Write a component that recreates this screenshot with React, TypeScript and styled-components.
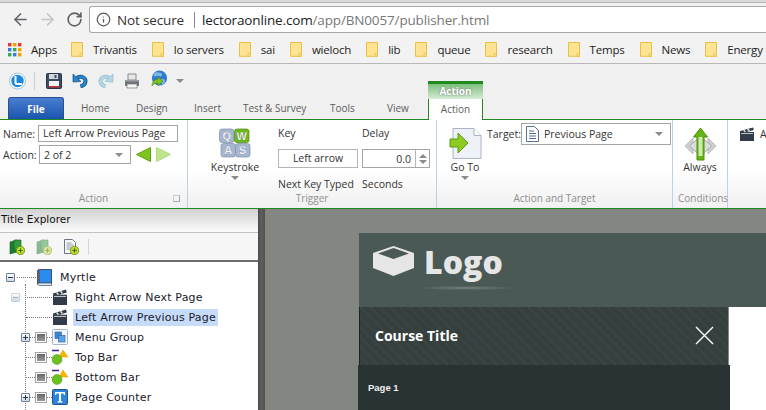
import React from 'react';
import styled, { createGlobalStyle } from 'styled-components';
import { ArrowLeft, ArrowRight, RotateCw, Info } from 'lucide-react';

const Global = createGlobalStyle`
  html, body { margin: 0; padding: 0; }
  body { width: 766px; height: 410px; overflow: hidden; background: #fff; }
  * { box-sizing: border-box; }
`;

const Page = styled('div')`
  width: 766px;
  height: 410px;
  display: flex;
  flex-direction: column;
  overflow: hidden;
  font-family: "Open Sans", "Liberation Sans", sans-serif;
`;

const TabStrip = styled('div')`
  height: 3px;
  background: #dadada;
  border-bottom: 1px solid #b4b4b4;
`;

const AddressBar = styled('div')`
  height: 33px;
  background: #f2f2f2;
  display: flex;
  align-items: center;
  padding: 0 0 0 7px;
  color: #5a5a5a;
`;

const NavButton = styled('div')<{ $off?: boolean }>`
  width: 27px;
  display: flex;
  justify-content: center;
  color: ${({ $off }) => ($off ? '#c4c4c4' : '#5f6368')};
`;

const UrlBox = styled('div')`
  flex: 1;
  height: 27px;
  margin-left: 1px;
  background: #fff;
  border: 1px solid #a9a9a9;
  border-right: 0;
  border-radius: 3px 0 0 3px;
  display: flex;
  align-items: center;
  padding-left: 6px;
  font-size: 13.5px;
  letter-spacing: -0.15px;
  white-space: nowrap;
`;

const NotSecure = styled('span')`
  margin-left: 6px;
  color: #333;
`;

const UrlDivider = styled('span')`
  width: 1px;
  height: 16px;
  background: #888;
  margin: 0 7px 0 10px;
`;

const Domain = styled('span')`
  color: #222;
`;

const UrlPath = styled('span')`
  color: #777;
`;

const Bookmarks = styled('div')`
  height: 28px;
  background: #f2f2f2;
  border-bottom: 1px solid #b8b8b8;
  display: flex;
  align-items: center;
  padding-left: 8px;
  white-space: nowrap;
  overflow: hidden;
  font-size: 11.5px;
  letter-spacing: -0.2px;
  color: #222;
`;

const AppsItem = styled('span')`
  display: flex;
  align-items: center;
  gap: 9px;
  margin-right: 14px;
`;

const Bookmark = styled('span')`
  display: flex;
  align-items: center;
  flex: none;
  gap: 10px;
  margin-right: 15px;
`;

const AppBar = styled('div')`
  height: 56px;
  background: #f0f0f0;
  display: flex;
  flex-direction: column;
  position: relative;
  border-bottom: 1px solid #1f8a1f;
`;

const QuickTools = styled('div')`
  height: 33px;
  display: flex;
  align-items: center;
  padding-left: 9px;
`;

const ToolSep = styled('span')`
  width: 1px;
  height: 18px;
  background: #cfcfcf;
  margin: 0 11px 0 8px;
`;

const ToolIcon = styled('span')<{ $gap?: number; $up?: number }>`
  display: flex;
  margin-right: ${({ $gap }) => $gap ?? 10}px;
  margin-bottom: ${({ $up }) => $up ?? 0}px;
`;

const Mirror = styled('span')`
  display: flex;
  transform: scaleX(-1);
`;

const Caret = styled('span')`
  display: block;
  width: 0;
  height: 0;
  border-left: 4px solid transparent;
  border-right: 4px solid transparent;
  border-top: 4px solid #8a8a8a;
`;

const Tabs = styled('div')`
  flex: 1;
  display: flex;
  align-items: flex-end;
  padding-left: 8px;
  font-size: 10px;
  color: #5c5c5c;
`;

const FileTab = styled('div')`
  width: 56px;
  height: 22px;
  margin-right: 17px;
  background: linear-gradient(#4a7ed0, #1a55ad);
  border: 1px solid #2a4f8f;
  border-bottom: 0;
  border-radius: 3px 3px 0 0;
  color: #fff;
  font-weight: 700;
  display: flex;
  align-items: center;
  justify-content: center;
`;

const Tab = styled('div')<{ $w: number }>`
  width: ${({ $w }) => $w}px;
  height: 22px;
  display: flex;
  align-items: center;
`;

const ContextTab = styled('div')`
  position: relative;
  width: 55px;
  height: 23px;
  margin-bottom: -1px;
  background: #fff;
  border: 1px solid #1f8a1f;
  border-bottom: 0;
  border-radius: 2px 2px 0 0;
  display: flex;
  align-items: center;
  justify-content: center;
`;

const ContextHeader = styled('div')`
  position: absolute;
  left: -1px;
  right: -1px;
  bottom: 21px;
  height: 18px;
  border-top: 3px solid #1f8a1f;
  background: linear-gradient(#7cc07c, #d5ebd5);
  color: #fff;
  font-weight: 700;
  text-align: center;
  line-height: 15px;
  text-shadow: 0 0 2px #666;
`;

const Ribbon = styled('div')`
  height: 89px;
  display: flex;
  border-bottom: 1px solid #1f8a1f;
  background: linear-gradient(#fff 55%, #f0f0f0);
  font-size: 10.5px;
  color: #333;
`;

const Group = styled('div')<{ $w: number }>`
  width: ${({ $w }) => $w}px;
  flex: none;
  display: flex;
  flex-direction: column;
  border-right: 1px solid #bcd0e6;
  position: relative;
`;

const GroupBody = styled('div')`
  flex: 1;
  display: flex;
  min-height: 0;
`;

const GroupLabel = styled('div')<{ $shift?: number }>`
  height: 22px;
  padding-left: ${({ $shift }) => $shift ?? 0}px;
  text-align: center;
  white-space: nowrap;
  font-size: 10px;
  line-height: 25px;
  color: #8f8f8f;
`;

const Launcher = styled('span')`
  position: absolute;
  right: 7px;
  bottom: 6px;
  width: 7px;
  height: 7px;
  border: 1px solid #aaa;
  border-top-color: #ccc;
  border-left-color: #ccc;
`;

const ActionForm = styled('div')`
  padding: 5px 0 0 3px;
  display: grid;
  grid-template-columns: 35px auto;
  grid-auto-rows: min-content;
  row-gap: 3px;
  align-items: center;
`;

const FieldText = styled('span')`
  white-space: nowrap;
`;

const NameInput = styled('div')`
  width: 140px;
  height: 17px;
  border: 1px solid #a5a5a5;
  background: #fff;
  padding-left: 4px;
  line-height: 15px;
  white-space: nowrap;
`;

const ActionRow = styled('div')`
  display: flex;
  align-items: center;
  gap: 5px;
  margin-left: 1px;
`;

const Dropdown = styled('div')<{ $w: number; $h: number }>`
  width: ${({ $w }) => $w}px;
  height: ${({ $h }) => $h}px;
  background: #fff;
  border: 1px solid #a5a5a5;
  display: flex;
  align-items: center;
  justify-content: space-between;
  padding: 0 7px 0 4px;
`;

const BigAction = styled('div')<{ $w: number; $ml: number }>`
  width: ${({ $w }) => $w}px;
  margin-left: ${({ $ml }) => $ml}px;
  padding-top: 8px;
  display: flex;
  flex-direction: column;
  align-items: center;
  flex: none;
`;

const BigIcon = styled('div')`
  height: 31px;
  display: flex;
  justify-content: center;
`;

const BigText = styled('div')`
  margin-top: 1px;
  line-height: 15px;
  white-space: nowrap;
`;

const BigCaret = styled(Caret)`
  margin-top: 1px;
`;

const TriggerGrid = styled('div')`
  margin-left: 18px;
  padding-top: 5px;
  display: grid;
  grid-template-columns: 80px 68px;
  column-gap: 4px;
  grid-template-rows: 16px 19px 16px;
  row-gap: 8px;
  align-items: center;
`;

const KeyBox = styled('div')`
  height: 19px;
  border: 1px solid #b5b5b5;
  background: #fff;
  text-align: center;
  line-height: 17px;
`;

const Spinner = styled('div')`
  height: 19px;
  border: 1px solid #a5a5a5;
  background: #fff;
  display: flex;
  align-items: center;
  justify-content: flex-end;
`;

const SpinValue = styled('span')`
  padding-right: 4px;
`;

const SpinArrows = styled('span')`
  width: 14px;
  height: 100%;
  border-left: 1px solid #b5b5b5;
  display: flex;
  flex-direction: column;
  align-items: center;
  justify-content: center;
  gap: 2px;
`;

const SpinUp = styled('span')`
  border-left: 4px solid transparent;
  border-right: 4px solid transparent;
  border-bottom: 4px solid #8a8a8a;
`;

const SpinDown = styled('span')`
  border-left: 4px solid transparent;
  border-right: 4px solid transparent;
  border-top: 4px solid #8a8a8a;
`;

const TargetRow = styled('div')`
  margin-left: 2px;
  padding-top: 3px;
  display: flex;
  align-items: flex-start;
`;

const TargetLabel = styled('span')`
  line-height: 22px;
`;

const TargetValue = styled('span')`
  display: flex;
  align-items: center;
  gap: 5px;
`;

const LastGroup = styled('div')`
  flex: 1;
  display: flex;
  align-items: flex-start;
  gap: 6px;
  padding: 7px 0 0 12px;
`;

const Workspace = styled('div')`
  flex: 1;
  display: flex;
  min-height: 0;
`;

const Explorer = styled('div')`
  width: 258px;
  display: flex;
  flex-direction: column;
  background: #fff;
`;

const ExplorerTitle = styled('div')`
  height: 24px;
  padding: 0 0 0 1px;
  background: linear-gradient(#d2d2d2, #fbfbfb);
  border-bottom: 1px solid #c4c4c4;
  font-family: "DejaVu Sans", sans-serif;
  font-size: 10.5px;
  line-height: 21px;
  color: #111;
`;

const ExplorerTools = styled('div')`
  height: 29px;
  display: flex;
  align-items: center;
  padding-left: 9px;
  gap: 11px;
  background: #f6f6f6;
  border-bottom: 2px solid #6e6e6e;
`;

const ExplorerSep = styled('span')`
  width: 1px;
  height: 16px;
  margin-left: -2px;
  background: #d5d5d5;
`;

const Tree = styled('div')`
  flex: 1;
  position: relative;
  padding-top: 5px;
  font-family: "DejaVu Sans", sans-serif;
  font-size: 11px;
  letter-spacing: 0.2px;
  color: #1a1a2e;
  overflow: hidden;

  &::before {
    content: '';
    position: absolute;
    left: 25px;
    top: 22px;
    bottom: 0;
    border-left: 1px dotted #777;
  }
`;

const TreeRow = styled('div')<{ $pad: number }>`
  position: relative;
  height: 20px;
  display: flex;
  align-items: center;
  padding-left: ${({ $pad }) => $pad}px;
`;

const Expander = styled('span')<{ $pale?: boolean }>`
  position: relative;
  z-index: 1;
  width: 9px;
  height: 9px;
  flex: none;
  border: 1px solid ${({ $pale }) => ($pale ? '#c8d2de' : '#6d7f96')};
  border-radius: 1px;
  background: linear-gradient(#fff, #ccd8e8);
  display: flex;
  align-items: center;
  justify-content: center;
`;

const ExpanderMark = styled('span')<{ $plus?: boolean; $pale?: boolean }>`
  position: relative;
  width: 5px;
  height: 1px;
  background: ${({ $pale }) => ($pale ? '#a0a8b4' : '#22344e')};

  &::after {
    content: '';
    display: ${({ $plus }) => ($plus ? 'block' : 'none')};
    position: absolute;
    left: 2px;
    top: -2px;
    width: 1px;
    height: 5px;
    background: #22344e;
  }
`;

const Dots = styled('span')<{ $w: number; $ml?: number }>`
  width: ${({ $w }) => $w}px;
  margin-left: ${({ $ml }) => $ml ?? 0}px;
  flex: none;
  border-top: 1px dotted #777;
`;

const VisBox = styled('span')`
  width: 12px;
  height: 11px;
  flex: none;
  border: 1px solid #a4a4a4;
  background: #fff;
  padding: 1px;

  &::after {
    content: '';
    display: block;
    width: 100%;
    height: 100%;
    background: linear-gradient(#666, #999);
  }
`;

const TreeIcon = styled('span')`
  width: 16px;
  height: 16px;
  flex: none;
  display: flex;
  align-items: center;
  justify-content: center;
`;

const TreeLabel = styled('span')<{ $selected?: boolean }>`
  margin-left: 5px;
  padding: 0 2px;
  line-height: 17px;
  white-space: nowrap;
  background: ${({ $selected }) => ($selected ? '#c5dbf7' : 'transparent')};
`;

const RootLabel = styled(TreeLabel)`
  margin-left: 6px;
`;

const Splitter = styled('div')`
  width: 7px;
  background: linear-gradient(90deg, #4c4c4c, #5e5e5e 50%, #505050);
`;

const Canvas = styled('div')`
  flex: 1;
  min-width: 0;
  background: #848682;
  padding: 24px 0 0 94px;
  overflow: hidden;
`;

const Course = styled('div')`
  width: 420px;
  height: 200px;
  background: #fff;
`;

const CourseHeader = styled('div')`
  height: 74px;
  background: #4a5955;
  display: flex;
  align-items: flex-start;
  padding: 13px 0 0 14px;
  gap: 10px;
`;

const LogoBlock = styled('div')`
  display: flex;
  flex-direction: column;
`;

const LogoText = styled('div')`
  margin-top: -1px;
  font-family: "Open Sans", sans-serif;
  font-weight: 800;
  font-size: 32px;
  line-height: 34px;
  color: #e6e6e6;
`;

const LogoShine = styled('div')`
  width: 94px;
  height: 4px;
  margin: 7px 0 0 -5px;
  background: radial-gradient(ellipse at center, #75827e, #4a5955 75%);
`;

const CourseMenu = styled('div')`
  width: 372px;
  margin-left: -1px;
`;

const CourseBar = styled('div')`
  height: 58px;
  margin: 0 1px;
  background: repeating-linear-gradient(45deg, #353f3e 0, #353f3e 5px, #3a4443 5px, #3a4443 7px);
  border-left: 1px solid #222;
  border-right: 1px solid #888;
  display: flex;
  align-items: center;
  justify-content: space-between;
  padding: 0 14px 2px 15px;
  color: #fff;
  font-family: "Open Sans", sans-serif;
  font-weight: 700;
  font-size: 14px;
`;

const PageItem = styled('div')`
  height: 50px;
  background: #293333;
  color: #f0f0f0;
  padding: 17px 0 0 10px;
  font-family: "Liberation Sans", sans-serif;
  font-weight: 700;
  font-size: 9.5px;
`;

const folderNames = ['Trivantis', 'lo servers', 'sai', 'wieloch', 'lib', 'queue', 'research', 'Temps', 'News', 'Energy'];

const AppsGrid = () => (
  <svg width="14" height="14" viewBox="0 0 14 14">
    {['#e53935', '#f4a000', '#e53935', '#3b78e7', '#34a853', '#f4a000', '#34a853', '#3b78e7', '#f4a000'].map((c, i) => (
      <rect key={i} x={(i % 3) * 5} y={Math.floor(i / 3) * 5} width="3.4" height="3.4" fill={c} />
    ))}
  </svg>
);

const Folder = () => (
  <svg width="12" height="15" viewBox="0 0 12 15">
    <path d="M.5.5h11v13.8H.5z" fill="#fde392" stroke="#e9bf45" />
    <rect x="9" y="11.5" width="2.5" height="2.5" fill="#fde392" stroke="#e9bf45" strokeWidth=".7" />
  </svg>
);

const LectoraLogo = () => (
  <svg width="17" height="18" viewBox="0 0 17 18">
    <circle cx="8.5" cy="9" r="8" fill="#fff" stroke="#9cc4e8" />
    <circle cx="8.5" cy="9" r="6.2" fill="#1b87d6" />
    <path d="M6.5 4v6.5c0 1 .5 1.5 1.5 1.5H13" fill="none" stroke="#fff" strokeWidth="2" />
  </svg>
);

const SaveIcon = () => (
  <svg width="16" height="16" viewBox="0 0 16 16">
    <rect x=".5" y=".5" width="15" height="15" rx="1" fill="#3f4d63" stroke="#2a3446" />
    <rect x="3" y="1" width="9" height="5" fill="#cfd6e0" />
    <rect x="8.5" y="2" width="2" height="3" fill="#3f4d63" />
    <rect x="3" y="8" width="10" height="5" fill="#f4f4f4" />
    <rect x="3" y="13" width="10" height="1.5" fill="#c8342c" />
  </svg>
);

const UndoIcon = ({ pale }: { pale?: boolean }) => (
  <svg width="16" height="15" viewBox="0 0 16 15">
    <path d="M8.5 13.5c3-1 5-3 5-5.5 0-3.5-4.5-5.5-8.5-3" fill="none" stroke={pale ? '#8fbdd0' : '#124c86'} strokeWidth="4" />
    <path d="M8.5 13.5c3-1 5-3 5-5.5 0-3.5-4.5-5.5-8.5-3" fill="none" stroke={pale ? '#b4d6e4' : '#2a86c8'} strokeWidth="2.6" />
    <path d="M1 1v8l8-.5z" fill={pale ? '#b4d6e4' : '#2a86c8'} stroke={pale ? '#8fbdd0' : '#124c86'} strokeWidth=".7" />
  </svg>
);

const RedoIcon = () => (
  <Mirror>
    <UndoIcon pale />
  </Mirror>
);

const PrintIcon = () => (
  <svg width="16" height="16" viewBox="0 0 16 16">
    <path d="M4 1h8v6H4z" fill="#e8e8e8" stroke="#8a8a8a" />
    <path d="M1 7h14v6H1z" fill="#6f7276" />
    <path d="M3 11h10v4H3z" fill="#f5f5f5" stroke="#777" strokeWidth=".7" />
    <path d="M1 7h14v1.5H1z" fill="#9a9da1" />
  </svg>
);

const GlobeIcon = () => (
  <svg width="17" height="17" viewBox="0 0 17 17">
    <circle cx="8.5" cy="8" r="7.6" fill="#2f7ccc" />
    <path d="M5 2c2 1 5 0 6 2s-2 3-3 2-4 1-5 0 0-3 2-4zM10 9c2 0 4 0 4 2s-2 4-3 3-2-4-1-5z" fill="#7fb7e8" />
    <path d="M1 16c0-4 2-6.5 6-6.5V7l5 4.300-5 4.300V13c-3 0-4.500 1-6 3z" fill="#7fc31c" stroke="#4d8a10" strokeWidth=".6" />
  </svg>
);

const TriLeft = ({ pale }: { pale?: boolean }) => (
  <svg width="15" height="15" viewBox="0 0 15 15">
    <path d="M14.5.5v14L.5 7.5z" fill={pale ? '#bfe58c' : '#7cc51f'} stroke={pale ? '#b0da7d' : '#5ea514'} />
  </svg>
);

const TriRight = () => (
  <Mirror>
    <TriLeft pale />
  </Mirror>
);

const KeyCap = ({ x, y, ch, on }: { x: number; y: number; ch: string; on?: boolean }) => (
  <g>
    <rect x={x} y={y} width="14.5" height="13.5" rx="2.5" fill={on ? '#6fb81b' : '#a6b6cf'} stroke={on ? '#4d8a10' : '#8091ab'} strokeWidth=".7" />
    <text x={x + 7.2} y={y + 10.5} textAnchor="middle" fontSize="11" fontWeight="700" fontFamily="Liberation Sans" fill="#fff" stroke="#5e6f8a" strokeWidth=".25">
      {ch}
    </text>
  </g>
);

const KeysIcon = () => (
  <svg width="32" height="31" viewBox="0 0 32 31">
    <KeyCap x={0.5} y={1} ch="Q" />
    <KeyCap x={15.5} y={1} ch="W" on />
    <KeyCap x={2} y={15.5} ch="A" />
    <KeyCap x={16.5} y={15.5} ch="S" />
  </svg>
);

const GoToIcon = () => (
  <svg width="33" height="31" viewBox="0 0 33 31">
    <path d="M4 .5h21l7 7v23H4z" fill="#eef2f8" stroke="#aab4c4" />
    <path d="M25 .5v7h7" fill="#fff" stroke="#aab4c4" />
    <path d="M1 11h8V5l10 10-10 10v-6H1z" fill="#8ccb1f" stroke="#5e9a10" />
  </svg>
);

const PageIcon = () => (
  <svg width="13" height="16" viewBox="0 0 13 16">
    <path d="M.5.5h8l4 4v11H.5z" fill="#fff" stroke="#5a6f96" />
    <path d="M3 5h5M3 7.5h7M3 10h7M3 12.5h7" stroke="#5a6f96" />
  </svg>
);

const AlwaysIcon = () => (
  <svg width="33" height="33" viewBox="0 0 33 33">
    <path d="M9 10L1 18l8 8zM24 10l8 8-8 8z" fill="#cfcfcf" stroke="#bcbcbc" />
    <path d="M16.5 8l11 10-11 10-11-10z" fill="#dcdcdc" stroke="#a8a8a8" />
    <path d="M16.5 0l7 9H20v23h-7V9H9.500z" fill="#62b512" stroke="#4b8f0c" />
    <rect x="14.5" y="9" width="4" height="19" fill="#cfe7b0" />
  </svg>
);

const ClapperIcon = ({ tall }: { tall?: boolean }) => (
  <svg width="14" height={tall ? 16 : 14} viewBox="0 0 14 14" preserveAspectRatio="none">
    <path d="M0 5h14v9H0z" fill="#323c48" />
    <path d="M0 4l13-3.500.8 2.500L.8 6.500z" fill="#323c48" />
    <path d="M3 3.300l1.500-.4 1.500 2-1.500.4zM7 2.200l1.500-.4 1.500 2-1.500.4z" fill="#e6e6e6" />
    <path d="M1 6.500h12" stroke="#e6e6e6" strokeWidth=".8" />
  </svg>
);

const BookIcon = () => (
  <svg width="15" height="17" viewBox="0 0 15 17">
    <path d="M2.5.5h12V14h-12c-1 0-1.500.5-2 1V2.500C.5 1 1 .5 2.500.5z" fill="#2a8cf0" stroke="#3a5168" />
    <path d="M.5 2.500C.5 1 1 .5 2.500.5H3V14h-.5c-1 0-1.500.5-2 1z" fill="#52677d" />
    <path d="M.8 15c.5-.7 1-1 2-1h11.700v2.500H2.500c-1 0-1.500-.5-1.700-1.500z" fill="#dfe8f2" stroke="#3a5168" strokeWidth=".7" />
  </svg>
);

const GroupIcon = () => (
  <svg width="16" height="16" viewBox="0 0 16 16">
    <rect x=".5" y=".5" width="15" height="15" rx="1" fill="#f3f6fb" stroke="#aab4c4" />
    <rect x="3" y="3" width="6.5" height="6.5" fill="#3d87d8" stroke="#2a5f9e" strokeWidth=".6" />
    <rect x="6.5" y="6.5" width="6.5" height="6.5" fill="#5aa0e8" stroke="#2a5f9e" strokeWidth=".6" />
  </svg>
);

const ShapesIcon = () => (
  <svg width="16" height="16" viewBox="0 0 16 16">
    <path d="M0 1.500h7" stroke="#3f1b8c" strokeWidth="1.5" />
    <path d="M11 1l5 7H7z" fill="#f7b500" stroke="#e29a00" strokeWidth=".5" />
    <circle cx="5" cy="10.5" r="5" fill="#6cbf20" stroke="#4f9a10" strokeWidth=".5" />
  </svg>
);

const TextIcon = () => (
  <svg width="16" height="16" viewBox="0 0 16 16">
    <rect x=".5" y=".5" width="15" height="15" rx="1" fill="#2c85dd" stroke="#24527f" />
    <path d="M3 3h10v3h-1l-.5-1.500H9V12l1.500.5v1h-5v-1L7 12V4.500H4.500L4 6H3z" fill="#fff" />
  </svg>
);

const AddBadge = () => (
  <g>
    <circle cx="11.5" cy="11.5" r="4.2" fill="#b7dc2a" stroke="#5b7f10" strokeWidth=".7" />
    <path d="M9.3 11.5h4.400M11.500 9.300v4.400" stroke="#33500a" strokeWidth=".8" />
  </g>
);

const AddChapter = ({ pale }: { pale?: boolean }) => (
  <svg width="16" height="16" viewBox="0 0 16 16" opacity={pale ? 0.5 : 1}>
    <path d="M1 3l7-2v12l-7 2z" fill="#1e7c2f" stroke="#145a20" strokeWidth=".6" />
    <path d="M5 1h7v10H5z" fill="#2f9a3f" stroke="#145a20" strokeWidth=".6" />
    <AddBadge />
  </svg>
);

const AddPage = () => (
  <svg width="16" height="16" viewBox="0 0 16 16">
    <path d="M1.5.5h8l3 3v11h-11z" fill="#f5f7fa" stroke="#6a7484" />
    <path d="M3.5 4h5M3.5 6h7M3.5 8h5M3.5 10h4" stroke="#7b8595" strokeWidth=".8" />
    <AddBadge />
  </svg>
);

const LogoBox = () => (
  <svg width="41" height="30" viewBox="0 0 41 30">
    <path d="M20.5 0L41 7v15l-20.500 8L0 22V7z" fill="#e6e6e6" />
    <path d="M20.5 2L36 7.500 20.500 13 5 7.500z" fill="#4a5955" />
  </svg>
);

const ExpandBox = ({ plus, pale }: { plus?: boolean; pale?: boolean }) => (
  <Expander $pale={pale}>
    <ExpanderMark $plus={plus} $pale={pale} />
  </Expander>
);

export default function App() {
  return (
    <Page>
      <Global />
      <TabStrip />
      <AddressBar>
        <NavButton><ArrowLeft size={19} strokeWidth={2} /></NavButton>
        <NavButton $off><ArrowRight size={19} strokeWidth={2} /></NavButton>
        <NavButton><RotateCw size={17} strokeWidth={2.4} /></NavButton>
        <UrlBox>
          <Info size={15} strokeWidth={2} />
          <NotSecure>Not secure</NotSecure>
          <UrlDivider />
          <Domain>lectoraonline.com</Domain>
          <UrlPath>/app/BN0057/publisher.html</UrlPath>
        </UrlBox>
      </AddressBar>
      <Bookmarks>
        <AppsItem><AppsGrid />Apps</AppsItem>
        {folderNames.map((name) => (
          <Bookmark key={name}><Folder />{name}</Bookmark>
        ))}
      </Bookmarks>
      <AppBar>
        <QuickTools>
          <LectoraLogo />
          <ToolSep />
          <ToolIcon><SaveIcon /></ToolIcon>
          <ToolIcon><UndoIcon /></ToolIcon>
          <ToolIcon><RedoIcon /></ToolIcon>
          <ToolIcon $gap={11}><PrintIcon /></ToolIcon>
          <ToolIcon $gap={8} $up={4}><GlobeIcon /></ToolIcon>
          <Caret />
        </QuickTools>
        <Tabs>
          <FileTab>File</FileTab>
          <Tab $w={55}>Home</Tab>
          <Tab $w={58}>Design</Tab>
          <Tab $w={49}>Insert</Tab>
          <Tab $w={87}>Test &amp; Survey</Tab>
          <Tab $w={57}>Tools</Tab>
          <Tab $w={41}>View</Tab>
          <ContextTab>
            <ContextHeader>Action</ContextHeader>
            Action
          </ContextTab>
        </Tabs>
      </AppBar>
      <Ribbon>
        <Group $w={188}>
          <GroupBody>
            <ActionForm>
              <FieldText>Name:</FieldText>
              <NameInput>Left Arrow Previous Page</NameInput>
              <FieldText>Action:</FieldText>
              <ActionRow>
                <Dropdown $w={92} $h={19}>2 of 2<Caret /></Dropdown>
                <TriLeft />
                <TriRight />
              </ActionRow>
            </ActionForm>
          </GroupBody>
          <GroupLabel>Action</GroupLabel>
          <Launcher />
        </Group>
        <Group $w={249}>
          <GroupBody>
            <BigAction $w={50} $ml={22}>
              <BigIcon><KeysIcon /></BigIcon>
              <BigText>Keystroke</BigText>
              <BigCaret />
            </BigAction>
            <TriggerGrid>
              <FieldText>Key</FieldText>
              <FieldText>Delay</FieldText>
              <KeyBox>Left arrow</KeyBox>
              <Spinner>
                <SpinValue>0.0</SpinValue>
                <SpinArrows><SpinUp /><SpinDown /></SpinArrows>
              </Spinner>
              <FieldText>Next Key Typed</FieldText>
              <FieldText>Seconds</FieldText>
            </TriggerGrid>
          </GroupBody>
          <GroupLabel>Trigger</GroupLabel>
        </Group>
        <Group $w={236}>
          <GroupBody>
            <BigAction $w={40} $ml={8}>
              <BigIcon><GoToIcon /></BigIcon>
              <BigText>Go To</BigText>
              <BigCaret />
            </BigAction>
            <TargetRow>
              <TargetLabel>Target:</TargetLabel>
              <Dropdown $w={150} $h={22}>
                <TargetValue><PageIcon />Previous Page</TargetValue>
                <Caret />
              </Dropdown>
            </TargetRow>
          </GroupBody>
          <GroupLabel>Action and Target</GroupLabel>
        </Group>
        <Group $w={55}>
          <GroupBody>
            <BigAction $w={54} $ml={0}>
              <BigIcon><AlwaysIcon /></BigIcon>
              <BigText>Always</BigText>
            </BigAction>
          </GroupBody>
          <GroupLabel $shift={5}>Conditions</GroupLabel>
        </Group>
        <LastGroup>
          <ClapperIcon />
          <FieldText>A</FieldText>
        </LastGroup>
      </Ribbon>
      <Workspace>
        <Explorer>
          <ExplorerTitle>Title Explorer</ExplorerTitle>
          <ExplorerTools>
            <AddChapter />
            <AddChapter pale />
            <AddPage />
            <ExplorerSep />
          </ExplorerTools>
          <Tree>
            <TreeRow $pad={6}>
              <ExpandBox />
              <Dots $w={19} $ml={2} />
              <TreeIcon><BookIcon /></TreeIcon>
              <RootLabel>Myrtle</RootLabel>
            </TreeRow>
            <TreeRow $pad={11}>
              <ExpandBox pale />
              <Dots $w={27} $ml={5} />
              <TreeIcon><ClapperIcon tall /></TreeIcon>
              <TreeLabel>Right Arrow Next Page</TreeLabel>
            </TreeRow>
            <TreeRow $pad={26}>
              <Dots $w={26} />
              <TreeIcon><ClapperIcon tall /></TreeIcon>
              <TreeLabel $selected>Left Arrow Previous Page</TreeLabel>
            </TreeRow>
            <TreeRow $pad={21}>
              <ExpandBox plus />
              <Dots $w={5} />
              <VisBox />
              <Dots $w={5} />
              <TreeIcon><GroupIcon /></TreeIcon>
              <TreeLabel>Menu Group</TreeLabel>
            </TreeRow>
            <TreeRow $pad={26}>
              <Dots $w={9} />
              <VisBox />
              <Dots $w={5} />
              <TreeIcon><ShapesIcon /></TreeIcon>
              <TreeLabel>Top Bar</TreeLabel>
            </TreeRow>
            <TreeRow $pad={26}>
              <Dots $w={9} />
              <VisBox />
              <Dots $w={5} />
              <TreeIcon><ShapesIcon /></TreeIcon>
              <TreeLabel>Bottom Bar</TreeLabel>
            </TreeRow>
            <TreeRow $pad={21}>
              <ExpandBox plus />
              <Dots $w={5} />
              <VisBox />
              <Dots $w={5} />
              <TreeIcon><TextIcon /></TreeIcon>
              <TreeLabel>Page Counter</TreeLabel>
            </TreeRow>
          </Tree>
        </Explorer>
        <Splitter />
        <Canvas>
          <Course>
            <CourseHeader>
              <LogoBox />
              <LogoBlock>
                <LogoText>Logo</LogoText>
                <LogoShine />
              </LogoBlock>
            </CourseHeader>
            <CourseMenu>
              <CourseBar>
                Course Title
                <svg width="19" height="19" viewBox="0 0 19 19">
                  <path d="M1 1l17 17M18 1L1 18" stroke="#fff" strokeWidth="1.4" />
                </svg>
              </CourseBar>
              <PageItem>Page 1</PageItem>
            </CourseMenu>
          </Course>
        </Canvas>
      </Workspace>
    </Page>
  );
}
